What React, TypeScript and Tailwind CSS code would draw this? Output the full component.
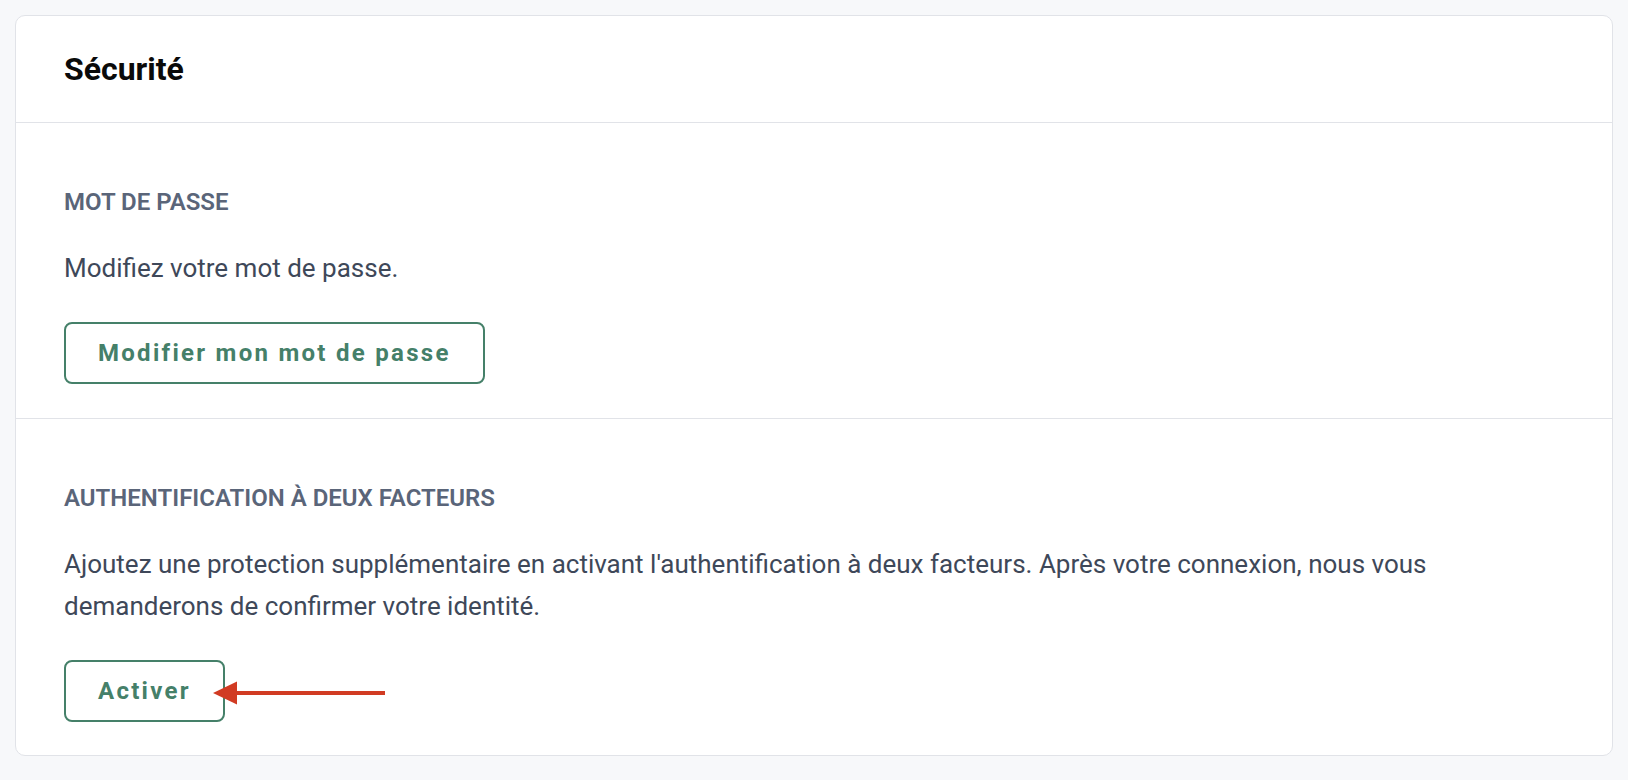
import React from "react";

const font = { fontFamily: "Roboto, 'Noto Sans', Arial, sans-serif" };

function Arrow() {
  return (
    <svg
      className="absolute left-[149px] top-[21px]"
      width="174"
      height="24"
      viewBox="0 0 174 24"
    >
      <path d="M0 12 L24 0.5 L24 23.5 Z" fill="#d13b23" />
      <rect x="22" y="10" width="150" height="4" fill="#d13b23" />
    </svg>
  );
}

function OutlineButton({ children }: { children: React.ReactNode }) {
  return (
    <button className="h-[62px] px-[32px] rounded-[8px] border-2 border-[#458069] bg-white text-[#458069] text-[24px] font-bold tracking-[0.095em] leading-none">
      {children}
    </button>
  );
}

export default function App() {
  return (
    <div
      className="min-h-screen w-full bg-[#f7f8fa] pt-[15px] px-[15px] pb-[24px]"
      style={font}
    >
      <div className="bg-white border border-[#e1e3e8] rounded-[10px]">
        <div className="h-[107px] flex items-center px-12 border-b border-[#e1e3e8]">
          <h1 className="text-[32px] font-bold text-[#0a0a0a] leading-none">
            Sécurité
          </h1>
        </div>

        <section className="px-12 pt-[63px] pb-[34px] border-b border-[#e1e3e8]">
          <h2 className="text-[24px] leading-[33px] font-semibold uppercase text-[#5a6579]">
            Mot de passe
          </h2>
          <p className="mt-[28px] text-[26px] leading-[42px] text-[#3e4859]">
            Modifiez votre mot de passe.
          </p>
          <div className="mt-[33px]">
            <OutlineButton>Modifier mon mot de passe</OutlineButton>
          </div>
        </section>

        <section className="px-12 pt-[63px] pb-[33px]">
          <h2 className="text-[24px] leading-[33px] font-semibold uppercase text-[#5a6579]">
            Authentification à deux facteurs
          </h2>
          <p className="mt-[28px] text-[26px] leading-[42px] text-[#3e4859]">
            Ajoutez une protection supplémentaire en activant l'authentification
            à deux facteurs. Après votre connexion, nous vous demanderons de
            confirmer votre identité.
          </p>
          <div className="mt-[33px] relative inline-block">
            <OutlineButton>Activer</OutlineButton>
            <Arrow />
          </div>
        </section>
      </div>
    </div>
  );
}
